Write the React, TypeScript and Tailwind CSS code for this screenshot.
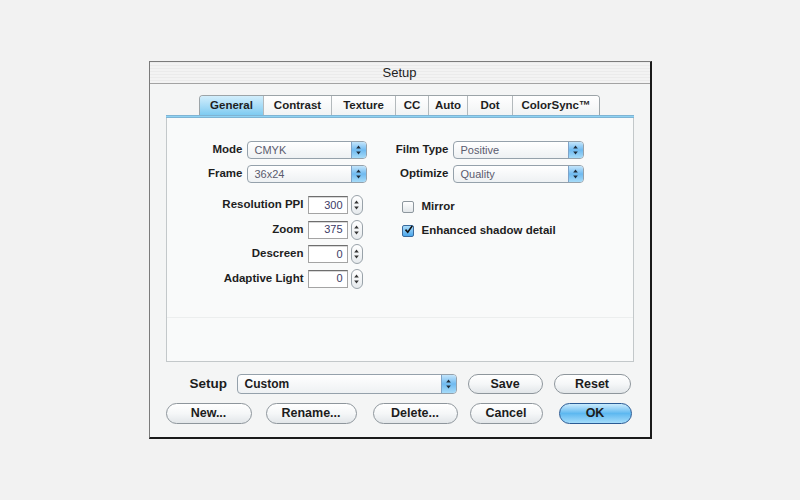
import { ReactNode } from 'react'

function Arrows({ color = '#1d2a38' }: { color?: string }) {
  return (
    <svg width="5" height="10" viewBox="0 0 5 10" fill={color}>
      <path d="M2.5 0.5 L4.8 3.5 L0.2 3.5 Z" />
      <path d="M0.2 6.5 L4.8 6.5 L2.5 9.5 Z" />
    </svg>
  )
}

function PopUp({ value, className, bold }: { value: string; className: string; bold?: boolean }) {
  return (
    <div
      className={`flex items-stretch rounded-[4px] border border-[#95a1ab] bg-gradient-to-b from-white to-[#eef1f3] ${className}`}
    >
      <span
        className={`flex flex-1 items-center truncate pl-[7px] ${
          bold ? 'text-[12px] font-bold text-[#1c1c1c]' : 'text-[11px] text-[#5b5b6e]'
        }`}
      >
        {value}
      </span>
      <span className="flex w-[15px] items-center justify-center rounded-r-[3px] border-l border-[#7ea3c8] bg-gradient-to-b from-[#c3e5fb] via-[#6fbaf0] to-[#a6dbf8]">
        <Arrows />
      </span>
    </div>
  )
}

function Stepper() {
  return (
    <div className="flex h-[20px] w-[12px] items-center justify-center rounded-full border border-[#99a2a9] bg-gradient-to-b from-white to-[#e6eaed]">
      <Arrows color="#333" />
    </div>
  )
}

function NumField({ label, value }: { label: string; value: string }) {
  return (
    <>
      <span className="text-right text-[11.5px] font-bold text-[#1e1e1e]">{label}</span>
      <div className="flex items-center gap-[3px]">
        <div className="flex h-[18px] w-[40px] items-center justify-end border border-[#a4a4a4] border-t-[#6e6e6e] bg-white pr-[4px] text-[11px] text-[#3c3a66] shadow-[inset_0_1px_0_#d8d8d8]">
          {value}
        </div>
        <Stepper />
      </div>
    </>
  )
}

function Checkbox({ checked, label }: { checked?: boolean; label: string }) {
  return (
    <label className="flex h-[14px] items-center gap-[8px] text-[11.5px] font-bold text-[#1e1e1e]">
      <span
        className={`flex h-[12px] w-[12px] items-center justify-center rounded-[2px] border ${
          checked
            ? 'border-[#3a6a9c] bg-gradient-to-b from-[#a9dcfa] to-[#4aa6ea]'
            : 'border-[#8e979e] bg-gradient-to-b from-white to-[#e3e7ea]'
        }`}
      >
        {checked && (
          <svg width="12" height="12" viewBox="0 0 12 12" className="-mt-[3px] ml-[1px]">
            <path d="M2 5.5 L5 9 L11 0.5" stroke="#111" strokeWidth="2.2" fill="none" />
          </svg>
        )}
      </span>
      {label}
    </label>
  )
}

function Button({ children, className, primary }: { children: ReactNode; className: string; primary?: boolean }) {
  return (
    <button
      className={`flex items-center justify-center rounded-full border text-[12.5px] font-bold text-[#1c1c1c] ${
        primary
          ? 'border-[#2a5a94] bg-gradient-to-b from-[#c9ebfd] via-[#5db8f0] to-[#a3dcfa]'
          : 'border-[#8e969c] bg-gradient-to-b from-white via-[#f5f7f8] to-[#e2e6e9]'
      } ${className}`}
    >
      {children}
    </button>
  )
}

const tabs = [
  { name: 'General', w: 'w-[63px]' },
  { name: 'Contrast', w: 'w-[68px]' },
  { name: 'Texture', w: 'w-[64px]' },
  { name: 'CC', w: 'w-[33px]' },
  { name: 'Auto', w: 'w-[39px]' },
  { name: 'Dot', w: 'w-[45px]' },
  { name: 'ColorSync™', w: 'w-[87px]' },
]

export default function App() {
  return (
    <div className="min-h-[500px] bg-[#f2f2f2] pt-[61px] font-['Liberation_Sans',Arial,sans-serif]">
      <div className="mx-auto w-[503px] border-l border-t border-r-2 border-b-2 border-l-[#7b7b7b] border-t-[#7b7b7b] border-r-[#1a1a1a] border-b-[#1a1a1a] bg-[#f4f5f5]">
        {/* title bar */}
        <div className="flex h-[22px] items-center justify-center border-b border-[#a3a3a3] bg-[repeating-linear-gradient(0deg,#f3f3f3_0px,#f3f3f3_2px,#ebebeb_2px,#ebebeb_3px)] text-[13px] text-[#222]">
          Setup
        </div>

        <div className="px-[16px] pt-[11px]">
          {/* tab strip */}
          <div className="flex justify-center">
            <div className="flex h-[20px] overflow-hidden rounded-t-[4px] border border-b-0 border-[#9ca4a8]">
              {tabs.map((t, i) => (
                <div
                  key={t.name}
                  className={`flex items-center justify-center text-[11.5px] font-bold text-[#1e1e1e] ${t.w} ${
                    i === 0
                      ? 'bg-gradient-to-b from-[#d2eefc] to-[#7ecbf1]'
                      : 'border-l border-[#b3b9bc] bg-gradient-to-b from-white to-[#f1f3f4]'
                  }`}
                >
                  {t.name}
                </div>
              ))}
            </div>
          </div>

          {/* tab panel */}
          <div className="h-[3px] border-y border-[#7fb4d4] bg-[#8fd3f3]" />
          <div className="flex h-[244px] flex-col border border-t-0 border-[#c3c8ca] bg-[#f9fafa]">
            <div className="flex-1 pt-[23px]">
              <div className="flex">
                <div className="grid grid-cols-[76px_120px] items-center gap-x-[4px] gap-y-[6px]">
                  <span className="text-right text-[11.5px] font-bold text-[#1e1e1e]">Mode</span>
                  <PopUp value="CMYK" className="h-[18px] w-[120px]" />
                  <span className="text-right text-[11.5px] font-bold text-[#1e1e1e]">Frame</span>
                  <PopUp value="36x24" className="h-[18px] w-[120px]" />
                </div>
                <div className="ml-[19px] grid grid-cols-[63px_131px] items-center gap-x-[4px] gap-y-[6px]">
                  <span className="text-right text-[11.5px] font-bold text-[#1e1e1e]">Film Type</span>
                  <PopUp value="Positive" className="h-[18px] w-[131px]" />
                  <span className="text-right text-[11.5px] font-bold text-[#1e1e1e]">Optimize</span>
                  <PopUp value="Quality" className="h-[18px] w-[131px]" />
                </div>
              </div>

              <div className="mt-[12px] flex">
                <div className="grid grid-cols-[137px_auto] items-center gap-x-[4px] gap-y-[4.5px]">
                  <NumField label="Resolution PPI" value="300" />
                  <NumField label="Zoom" value="375" />
                  <NumField label="Descreen" value="0" />
                  <NumField label="Adaptive Light" value="0" />
                </div>
                <div className="ml-[39px] flex flex-col gap-[10px] pt-[5px]">
                  <Checkbox label="Mirror" />
                  <Checkbox label="Enhanced shadow detail" checked />
                </div>
              </div>
            </div>
            <div className="h-[44px] border-t border-[#eceeee]" />
          </div>

          {/* presets */}
          <div className="mt-[12px] flex h-[20px] items-center">
            <span className="ml-[24px] w-[47px] text-[13.5px] font-bold text-[#1c1c1c]">Setup</span>
            <PopUp value="Custom" bold className="h-[20px] w-[220px]" />
            <Button className="ml-[11px] h-[20px] w-[75px]">Save</Button>
            <Button className="ml-[11px] h-[20px] w-[77px]">Reset</Button>
          </div>
          <div className="mt-[9px] mb-[13px] flex h-[21px] items-center">
            <Button className="h-[21px] w-[86px]">New...</Button>
            <Button className="ml-[14px] h-[21px] w-[91px]">Rename...</Button>
            <Button className="ml-[16px] h-[21px] w-[85px]">Delete...</Button>
            <Button className="ml-[12px] h-[21px] w-[73px]">Cancel</Button>
            <Button primary className="ml-[16px] h-[21px] w-[73px]">
              OK
            </Button>
          </div>
        </div>
      </div>
    </div>
  )
}
